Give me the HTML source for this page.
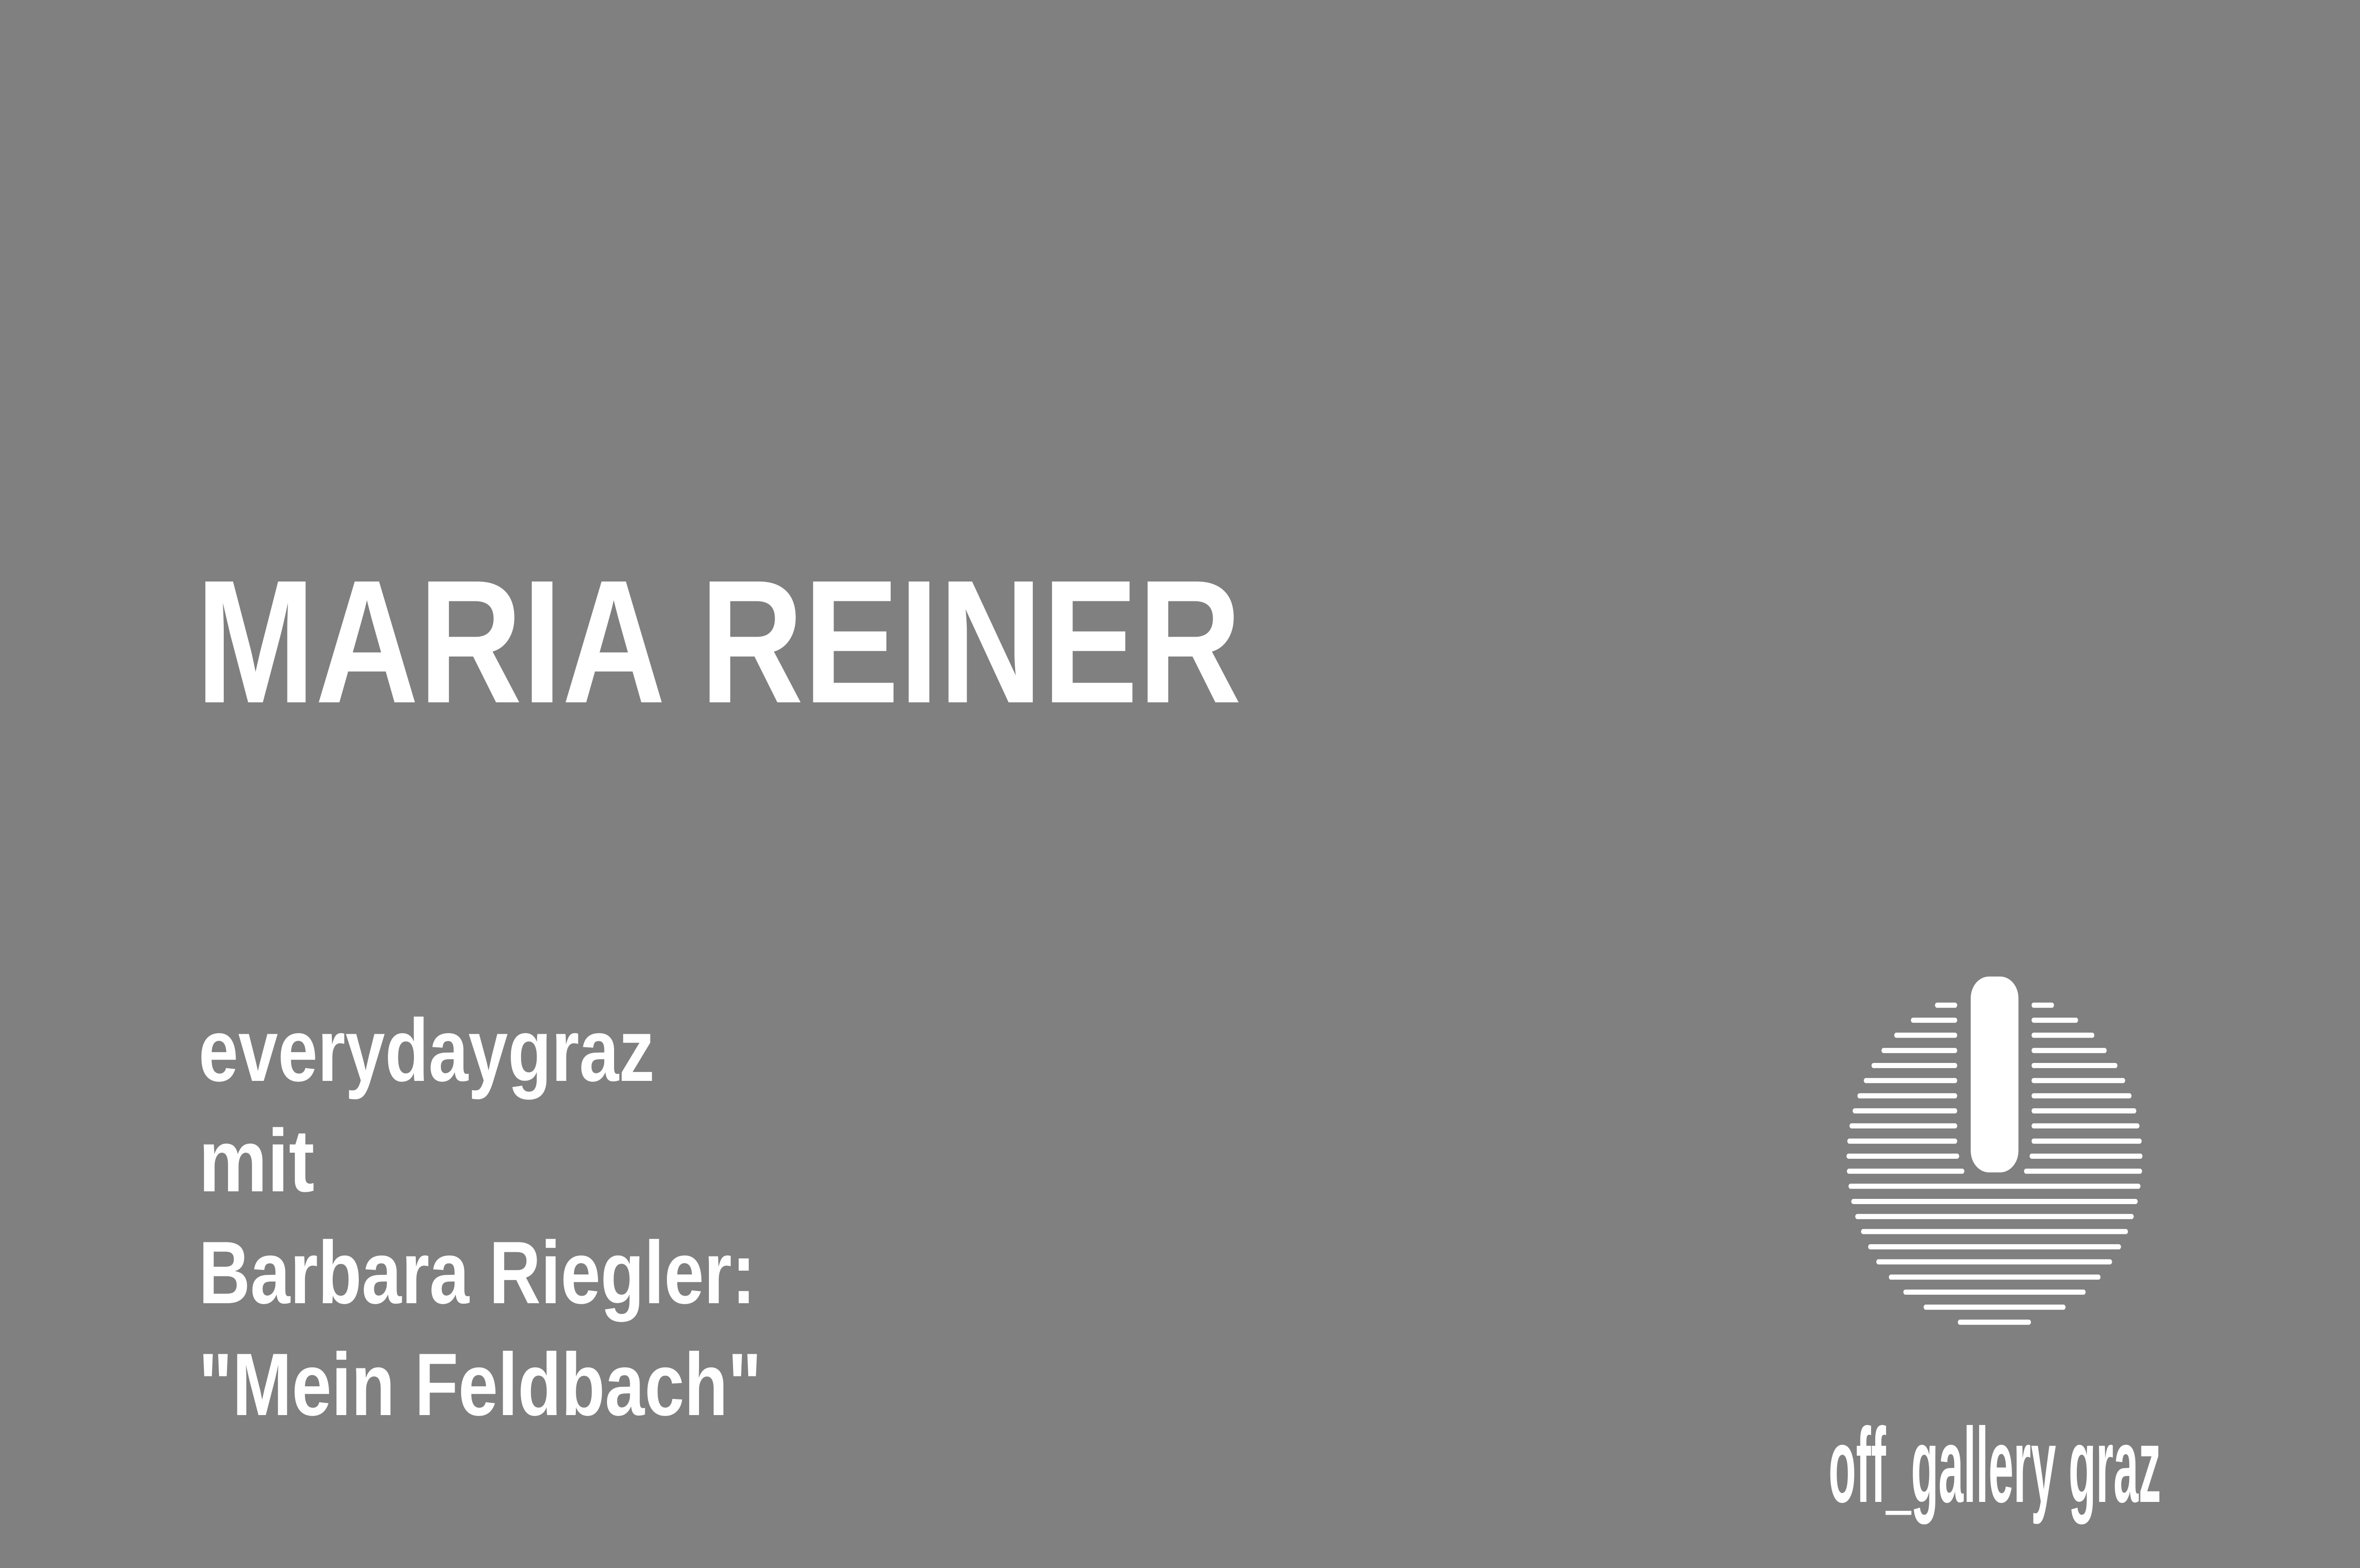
<!DOCTYPE html>
<html><head><meta charset="utf-8">
<style>
html,body{margin:0;padding:0;background:#808080;width:100%;height:100%;overflow:hidden;}
svg{display:block;position:fixed;left:0;top:0;width:100vw;height:100vh;}
</style></head><body>
<svg viewBox="0 0 5906 3322" preserveAspectRatio="none" xmlns="http://www.w3.org/2000/svg">
<rect width="5906" height="3322" fill="#808080"/>
<g fill="#fff" font-family="'Liberation Sans', sans-serif" font-weight="bold">
<text x="490" y="1488" font-size="372" textLength="2617" lengthAdjust="spacingAndGlyphs">MARIA REINER</text>
<text x="497" y="2290" font-size="188" textLength="1141" lengthAdjust="spacingAndGlyphs">everydaygraz</text>
<text x="497" y="2524" font-size="188" textLength="290" lengthAdjust="spacingAndGlyphs">mit</text>
<text x="497" y="2761" font-size="188" textLength="1394" lengthAdjust="spacingAndGlyphs">Barbara Riegler:</text>
<text x="497" y="2998" font-size="188" textLength="1409" lengthAdjust="spacingAndGlyphs">"Mein Feldbach"</text>
</g>
<text x="4576" y="3182" fill="#fff" font-family="'Liberation Sans Narrow','Liberation Sans',sans-serif" font-weight="bold" font-size="225" textLength="832" lengthAdjust="spacingAndGlyphs">off_gallery graz</text>
<g transform="translate(4600,2050) scale(0.4975)">
<rect x="667" y="38" width="240" height="834" rx="92" fill="#fff"/>
<g stroke="#fff" stroke-width="22" stroke-linecap="round" fill="none">
<path d="M498 160H588M984 160H1075
M377 224H588M984 224H1196
M293 288H588M984 288H1278
M229 353H588M984 353H1340
M179 417H588M984 417H1394
M140 481H588M984 481H1433
M108 546H588M984 546H1465
M84 610H588M984 610H1489
M68 674H588M984 674H1505
M57 739H588M984 739H1516
M53 803H598M974 803H1520
M55 867H624M946 867H1518
M63 931H1510
M77 996H1496
M97 1060H1476
M126 1124H1447
M162 1189H1412
M203 1253H1367
M266 1318H1309
M339 1382H1234
M441 1446H1133
M613 1510H959"/>
</g>
</g>
</svg>
</body></html>
